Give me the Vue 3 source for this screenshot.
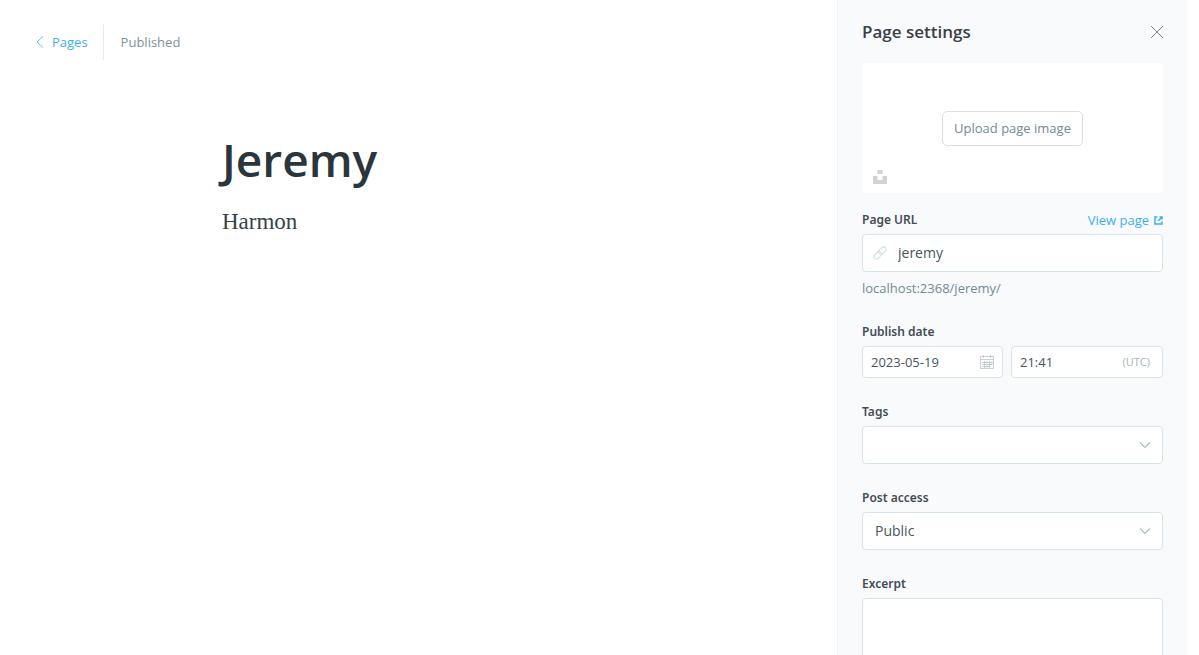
<script setup>
import { ref } from 'vue'

const slug = ref('jeremy')
const date = ref('2023-05-19')
const time = ref('21:41')
const tag = ref('')
const access = ref('Public')
const excerpt = ref('')
</script>

<template>
  <div class="screen">
    <main class="editor">
      <header class="topbar">
        <a class="back" href="#pages">
          <svg width="8" height="12" viewBox="0 0 8 12" aria-hidden="true">
            <path d="M7 .5 1 6l6 5.500" fill="none" stroke="currentColor" stroke-width=".8" />
          </svg>
          Pages
        </a>
        <span class="status">Published</span>
      </header>
      <article class="content">
        <h1>Jeremy</h1>
        <p>Harmon</p>
      </article>
    </main>

    <aside class="settings">
      <header class="settings-head">
        <h2>Page settings</h2>
        <button class="close" type="button" aria-label="Close">
          <svg width="12" height="12" viewBox="0 0 12 12" aria-hidden="true">
            <path d="M0 0l12 12M12 0L0 12" fill="none" stroke="#7f8b92" stroke-width="1" />
          </svg>
        </button>
      </header>

      <section class="uploader">
        <button class="upload" type="button">Upload page image</button>
        <button class="unsplash" type="button" aria-label="Unsplash">
          <svg width="14" height="14" viewBox="0 0 14 14" aria-hidden="true">
            <path d="M4.500 0h5v4h-5zM0 6h4.500v4h5V6H14v8H0z" fill="#d2d2d2" />
          </svg>
        </button>
      </section>

      <form class="fields">
        <div class="field">
          <div class="label-row">
            <label for="url">Page URL</label>
            <a class="view" href="#view">
              View page
              <svg width="9" height="9" viewBox="0 0 9 9" aria-hidden="true">
                <path d="M3.500 1H1v7h7V5.500M5.500 1H8v2.500M8 1 4 5" fill="none" stroke="currentColor" stroke-width="1.500" />
              </svg>
            </a>
          </div>
          <div class="box url">
            <svg class="lead" width="12" height="12" viewBox="0 0 12 12" aria-hidden="true">
              <g fill="none" stroke="#d3dfe6" stroke-width="1.100" transform="rotate(-45 6 6)">
                <rect x="-1.500" y="3.500" width="8.500" height="5" rx="2.500" />
                <rect x="5" y="3.500" width="8.500" height="5" rx="2.500" />
              </g>
            </svg>
            <input id="url" v-model="slug" type="text" />
          </div>
          <p class="hint">localhost:2368/jeremy/</p>
        </div>

        <div class="field">
          <label for="date">Publish date</label>
          <div class="pair">
            <div class="box small">
              <input id="date" v-model="date" type="text" />
              <svg width="14" height="14" viewBox="0 0 14 14" aria-hidden="true">
                <path d="M.5 1.500h13v12H.5zM.5 4.500h13M3.500 0v3M10.500 0v3M2 7.500h10M2 9.500h10M2 11.500h8M4.500 6v7M7 6v7M9.500 6v7M12 6v4" fill="none" stroke="#b9c4ca" stroke-width=".8" />
              </svg>
            </div>
            <div class="box small">
              <input v-model="time" type="text" aria-label="Publish time" />
              <span class="zone">(UTC)</span>
            </div>
          </div>
        </div>

        <div class="field">
          <label for="tags">Tags</label>
          <div class="box">
            <select id="tags" v-model="tag">
              <option value=""></option>
            </select>
            <svg width="10" height="6" viewBox="0 0 10 6" aria-hidden="true">
              <path d="M0 .5l5 5 5-5" fill="none" stroke="#adbdc5" stroke-width="1.200" />
            </svg>
          </div>
        </div>

        <div class="field">
          <label for="access">Post access</label>
          <div class="box">
            <select id="access" v-model="access">
              <option>Public</option>
            </select>
            <svg width="10" height="6" viewBox="0 0 10 6" aria-hidden="true">
              <path d="M0 .5l5 5 5-5" fill="none" stroke="#adbdc5" stroke-width="1.200" />
            </svg>
          </div>
        </div>

        <div class="field">
          <label for="excerpt">Excerpt</label>
          <textarea id="excerpt" v-model="excerpt"></textarea>
        </div>
      </form>
    </aside>
  </div>
</template>

<style>
body {
  margin: 0;
  background: #fff;
}
</style>

<style scoped>
* {
  box-sizing: border-box;
}

.screen {
  display: flex;
  height: 100vh;
  padding-right: 12px;
  overflow: hidden;
  font-family: "Open Sans", "Noto Sans", sans-serif;
  font-size: 13px;
  line-height: 20px;
  color: #394047;
}

svg {
  display: block;
  flex: none;
  overflow: visible;
}

button {
  padding: 0;
  border: 0;
  background: none;
  font: inherit;
  cursor: pointer;
}

a {
  text-decoration: none;
}

.editor {
  flex: 1;
  min-width: 0;
}

.topbar {
  display: flex;
  align-items: center;
  height: 36px;
  margin: 24px 36px 0;
}

.back {
  display: flex;
  align-items: center;
  gap: 8px;
  height: 36px;
  padding-right: 15px;
  border-right: 1px solid #e3e9ed;
  color: #3eb0ef;
}

.status {
  padding-left: 17px;
  color: #7d939b;
}

.content {
  margin: 70px 60px 0 222px;
}

h1 {
  margin: 0;
  font-size: 46px;
  font-weight: 600;
  line-height: 58px;
  color: #2b363c;
}

.content p {
  margin: 18px 0 0;
  font-family: "Liberation Serif", serif;
  font-size: 23px;
  line-height: 32px;
  color: #36424a;
}

.settings {
  flex: none;
  width: 350px;
  padding: 0 24px;
  border-left: 1px solid #edf3f8;
  background: #f9fafc;
}

.settings-head {
  display: flex;
  align-items: center;
  justify-content: space-between;
  height: 63px;
}

h2 {
  margin: 0;
  font-size: 17px;
  font-weight: 600;
  line-height: 24px;
}

.uploader {
  position: relative;
  display: flex;
  align-items: center;
  justify-content: center;
  height: 130px;
  border-radius: 4px;
  background: #fff;
}

.upload {
  height: 35px;
  padding: 0 11px;
  border: 1px solid #d5e1e6;
  border-radius: 5px;
  color: #738a94;
}

.unsplash {
  position: absolute;
  left: 11px;
  bottom: 9px;
}

.fields {
  display: flex;
  flex-direction: column;
  gap: 24px;
  padding-top: 17px;
}

.field {
  display: flex;
  flex-direction: column;
  gap: 4px;
}

label {
  font-family: "Noto Sans", sans-serif;
  font-size: 12px;
  font-weight: 600;
  color: #434c53;
}

.label-row {
  display: flex;
  justify-content: space-between;
}

.view {
  display: flex;
  align-items: center;
  gap: 5px;
  color: #3eb0ef;
}

.box {
  display: flex;
  align-items: center;
  height: 38px;
  padding: 0 12px;
  border: 1px solid #d7e4ea;
  border-radius: 4px;
  background: #fff;
}

.url {
  padding-left: 11px;
}

.lead {
  margin-right: 12px;
}

.pair {
  display: grid;
  grid-template-columns: 141px minmax(0, 1fr);
  gap: 8px;
}

.small {
  height: 32px;
  padding: 0 8px;
}

input,
select {
  flex: 1;
  min-width: 0;
  padding: 0;
  border: 0;
  outline: 0;
  appearance: none;
  background: none;
  font: inherit;
  font-size: 14px;
  color: #4a545b;
}

.small input {
  font-size: 13px;
}

.zone {
  padding-right: 4px;
  font-size: 11px;
  color: #a5b5bd;
}

.hint {
  margin: 2px 0 0;
  color: #738a94;
}

textarea {
  height: 112px;
  padding: 8px 12px;
  border: 1px solid #d7e4ea;
  border-radius: 4px;
  outline: 0;
  resize: none;
  background: #fff;
  font: inherit;
}
</style>
